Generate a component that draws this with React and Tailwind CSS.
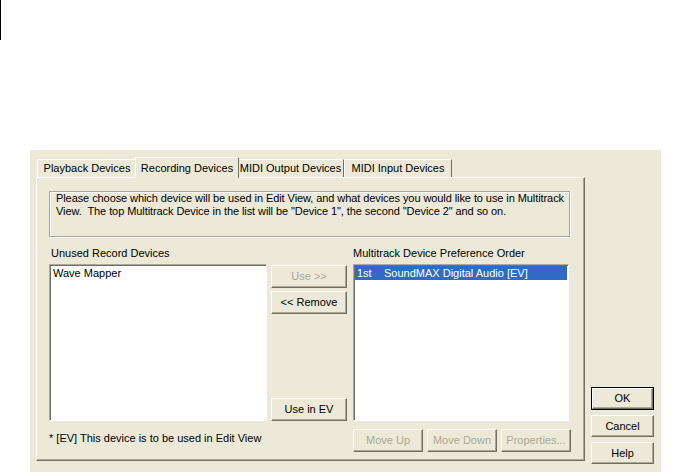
import React from 'react';

const font = { fontFamily: '"Liberation Sans", Arial, sans-serif' };

const Btn = ({ children, disabled, isDefault, className = '' }) => (
  <div className={`${isDefault ? 'border border-black' : ''} ${className}`}>
    <div
      className={`h-full w-full flex items-center justify-center border border-t-white border-l-white border-b-[#716f64] border-r-[#716f64] bg-[#ece9d8] shadow-[inset_-1px_-1px_0_#aca899] text-[11px] ${
        disabled ? 'text-[#aca899]' : 'text-black'
      }`}
    >
      {children}
    </div>
  </div>
);

const Tab = ({ children, active, className = '' }) => (
  <div
    className={`flex items-center justify-center border-t border-l border-r border-t-white border-l-white border-r-[#716f64] bg-[#ece9d8] text-[11px] whitespace-nowrap ${
      active ? 'h-[21px] relative z-10 -mb-px px-[5px]' : 'h-[18px] px-[4px]'
    } ${className}`}
  >
    {children}
  </div>
);

const ListBox = ({ children, className = '' }) => (
  <div
    className={`bg-white border border-t-[#aca899] border-l-[#aca899] border-b-white border-r-white shadow-[inset_1px_1px_0_#716f64] ${className}`}
  >
    {children}
  </div>
);

export default function App() {
  return (
    <div className="w-[694px] h-[472px] bg-white overflow-hidden flex flex-col" style={font}>
      <div className="w-[1px] h-[40px] bg-black shrink-0" />
      <div className="ml-[30px] mt-[110px] w-[631px] h-[322px] bg-[#ece9d8] flex text-black">
        {/* left: tab control */}
        <div className="pl-[6px] pt-[7px] flex flex-col">
          <div className="flex items-end h-[20px] pl-[1px]">
            <Tab className="w-[100px]">Playback Devices</Tab>
            <Tab active className="w-[104px] -mx-[2px]">Recording Devices</Tab>
            <Tab className="w-[107px]">MIDI Output Devices</Tab>
            <Tab className="w-[108px]">MIDI Input Devices</Tab>
          </div>
          <div className="w-[549px] h-[284px] border border-t-white border-l-white border-b-[#716f64] border-r-[#716f64] shadow-[inset_-1px_-1px_0_#aca899] px-[12px] pt-[13px] flex flex-col">
            <div className="w-[521px] h-[46px] border border-[#aca899] shadow-[inset_1px_1px_0_#fff,1px_1px_0_#fff] px-[6px] pt-0 text-[11px] leading-[13px] tracking-[-0.08px]">
              <div className="whitespace-nowrap">Please choose which device will be used in Edit View, and what devices you would like to use in Multitrack</div>
              <div className="whitespace-nowrap">View.&nbsp; The top Multitrack Device in the list will be "Device 1", the second "Device 2" and so on.</div>
            </div>
            <div className="flex mt-[10px]">
              <div className="flex flex-col w-[218px]">
                <div className="text-[11px] leading-[13px] pl-[2px] h-[17px]">Unused Record Devices</div>
                <ListBox className="h-[157px] w-[218px] pl-[3px] pt-[2px] text-[11px] leading-[13px]">
                  Wave Mapper
                </ListBox>
              </div>
              <div className="flex flex-col w-[76px] ml-[4px] pt-[18px]">
                <Btn disabled className="h-[23px]">Use &gt;&gt;</Btn>
                <Btn className="h-[23px] mt-[3px]">&lt;&lt; Remove</Btn>
                <Btn className="h-[23px] mt-auto">Use in EV</Btn>
              </div>
              <div className="flex flex-col w-[216px] ml-[6px]">
                <div className="text-[11px] leading-[13px] h-[17px]">Multitrack Device Preference Order</div>
                <ListBox className="h-[157px] w-[216px] p-[1px] text-[11px] leading-[13px]">
                  <div className="bg-[#316ac5] text-white h-[14px] flex items-center whitespace-nowrap">
                    <span className="w-[29px] pl-[2px]">1st</span>
                    <span>SoundMAX Digital Audio [EV]</span>
                  </div>
                </ListBox>
              </div>
            </div>
            <div className="flex mt-[8px]">
              <div className="w-[304px] pt-[3px] text-[11px] leading-[13px] whitespace-nowrap">* [EV] This device is to be used in Edit View</div>
              <div className="flex gap-[4px]">
                <Btn disabled className="w-[70px] h-[23px]">Move Up</Btn>
                <Btn disabled className="w-[70px] h-[23px]">Move Down</Btn>
                <Btn disabled className="w-[70px] h-[23px]">Properties...</Btn>
              </div>
            </div>
          </div>
        </div>
        {/* right: dialog buttons */}
        <div className="flex flex-col justify-end pb-[8px] ml-[6px] gap-[5px]">
          <Btn isDefault className="w-[63px] h-[23px]">OK</Btn>
          <Btn className="w-[63px] h-[22px]">Cancel</Btn>
          <Btn className="w-[63px] h-[22px]">Help</Btn>
        </div>
      </div>
    </div>
  );
}
